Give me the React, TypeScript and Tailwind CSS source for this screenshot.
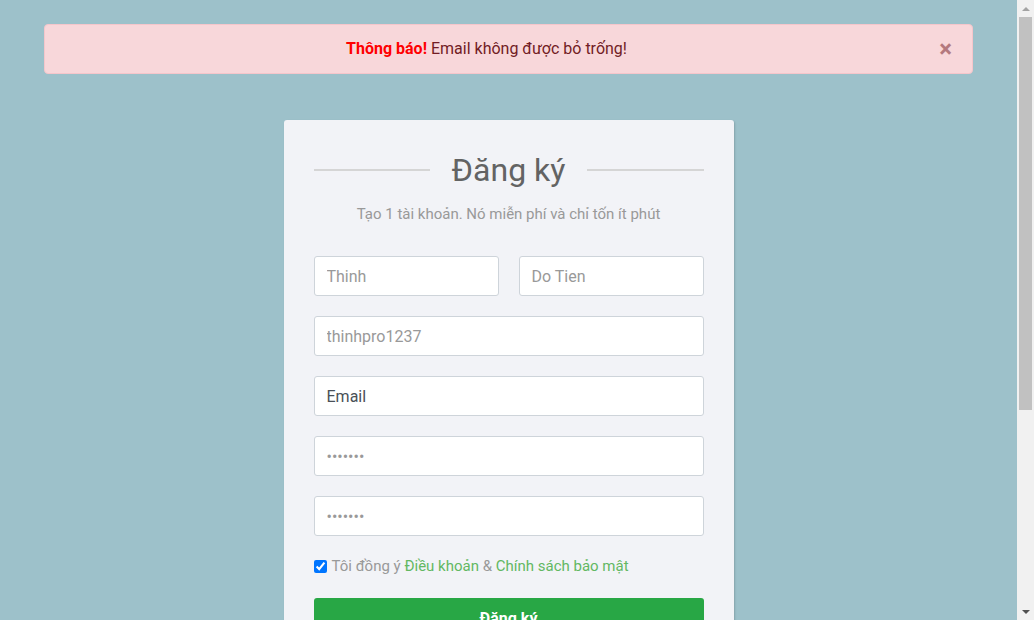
import React, { useState } from 'react';

const inputCls =
  'h-10 w-full min-w-0 rounded-[3px] border border-[#ced4da] bg-white px-3 text-[16px] text-[#495057] outline-none placeholder:text-[#999]';

export default function App() {
  const [showAlert, setShowAlert] = useState(true);
  const [agree, setAgree] = useState(true);

  return (
    <div className="flex h-[620px] overflow-hidden font-['Roboto','Noto_Sans',sans-serif]">
      <div className="h-full w-[1017px] shrink-0 overflow-hidden bg-[#9dc1ca] pt-6">
        {showAlert && (
          <div className="relative mx-11 flex h-[50px] items-center justify-center rounded border border-[#f5c6cb] bg-[#f8d7da] pl-5 pr-16 text-[16px] text-[#721c24]">
            <span>
              <strong className="font-bold text-[#ff0000]">Thông báo!</strong> Email không được bỏ trống!
            </span>
            <button
              onClick={() => setShowAlert(false)}
              className="absolute right-0 top-0 h-full px-5 text-[24px] font-bold leading-none text-[#721c24] opacity-50"
            >
              ×
            </button>
          </div>
        )}

        <div className="mx-auto mt-[46px] w-[450px] rounded-[3px] bg-[#f2f3f7] p-[30px] shadow-[1px_1px_2px_rgba(0,0,0,0.15)]">
          <div className="flex h-10 items-center">
            <div className="h-[2px] flex-1 bg-[#d5d5d5]" />
            <h2 className="px-[22px] text-[32px] leading-10 text-[#636363]">Đăng ký</h2>
            <div className="h-[2px] flex-1 bg-[#d5d5d5]" />
          </div>
          <p className="mt-[14px] text-center text-[15px] leading-5 text-[#999]">
            Tạo 1 tài khoản. Nó miễn phí và chỉ tốn ít phút
          </p>

          <form className="mt-8 flex flex-col gap-5" onSubmit={(e) => e.preventDefault()}>
            <div className="flex gap-5">
              <input className={inputCls} placeholder="Thinh" />
              <input className={inputCls} placeholder="Do Tien" />
            </div>
            <input className={inputCls} placeholder="thinhpro1237" />
            <input
              className="h-10 w-full rounded-[3px] border border-[#ced4da] bg-white px-3 text-[16px] text-[#495057] outline-none placeholder:text-[#495057]"
              placeholder="Email"
            />
            <input type="password" className={inputCls} placeholder="•••••••" />
            <input type="password" className={inputCls} placeholder="•••••••" />

            <label className="flex items-center gap-[5px] text-[15px] leading-5 text-[#999]">
              <input
                type="checkbox"
                checked={agree}
                onChange={(e) => setAgree(e.target.checked)}
                className="m-0 h-[13px] w-[13px]"
              />
              <span>
                Tôi đồng ý <a href="#" className="text-[#62b862]">Điều khoản</a> &amp;{' '}
                <a href="#" className="text-[#62b862]">Chính sách bảo mật</a>
              </span>
            </label>

            <button
              type="submit"
              className="mt-[2px] h-[42px] w-full rounded-[3px] bg-[#28a745] text-[16px] font-bold text-white"
            >
              Đăng ký
            </button>
          </form>
        </div>
      </div>

      {/* scrollbar */}
      <div className="flex h-full w-[17px] flex-col bg-[#f1f1f1]">
        <div className="flex h-[17px] items-center justify-center">
          <div className="h-0 w-0 border-x-[4px] border-b-[4px] border-x-transparent border-b-[#a3a3a3]" />
        </div>
        <div className="mx-[2px] h-[393px] bg-[#c1c1c1]" />
        <div className="flex-1" />
        <div className="flex h-[17px] items-center justify-center">
          <div className="h-0 w-0 border-x-[4px] border-t-[4px] border-x-transparent border-t-[#505050]" />
        </div>
      </div>
    </div>
  );
}
